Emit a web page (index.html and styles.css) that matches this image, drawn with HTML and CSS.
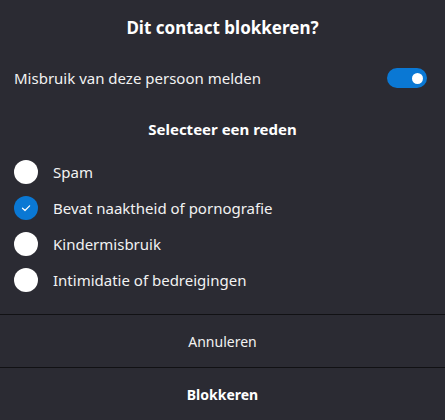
FILE: index.html
```html
<!DOCTYPE html>
<html lang="nl">
<head>
<meta charset="utf-8">
<link rel="stylesheet" href="styles.css">
</head>
<body>
<div class="dialog">
  <div class="title">Dit contact blokkeren?</div>
  <div class="toggle-row">
    <span class="toggle-label">Misbruik van deze persoon melden</span>
    <span class="toggle"><span class="knob"></span></span>
  </div>
  <div class="subtitle">Selecteer een reden</div>
  <div class="options">
    <div class="option"><span class="radio"></span><span class="opt-label">Spam</span></div>
    <div class="option"><span class="radio checked"><svg width="12" height="12" viewBox="0 0 12 12"><path d="M2.5 6.2 L5 8.5 L9.6 3.8" fill="none" stroke="#fff" stroke-width="1.2" stroke-linecap="round" stroke-linejoin="round"/></svg></span><span class="opt-label">Bevat naaktheid of pornografie</span></div>
    <div class="option"><span class="radio"></span><span class="opt-label">Kindermisbruik</span></div>
    <div class="option"><span class="radio"></span><span class="opt-label">Intimidatie of bedreigingen</span></div>
  </div>
  <div class="footer">
    <div class="btn">Annuleren</div>
    <div class="btn primary">Blokkeren</div>
  </div>
</div>
</body>
</html>
```
FILE: styles.css
```css
html, body {
  margin: 0;
  padding: 0;
  background: #2b2b33;
}
body {
  font-family: "Noto Sans", "Open Sans", sans-serif;
  color: #f2f2f2;
  width: 445px;
  height: 420px;
  overflow: hidden;
}
.dialog {
  display: flex;
  flex-direction: column;
  height: 420px;
}
.title {
  text-align: center;
  font-weight: 700;
  font-size: 17px;
  line-height: 22px;
  padding-top: 17px;
  color: #fff;
}
.toggle-row {
  display: flex;
  align-items: center;
  justify-content: space-between;
  padding: 0 18px 0 14px;
  margin-top: 18px;
  height: 42px;
}
.toggle-label {
  font-size: 15px;
}
.toggle {
  width: 40px;
  height: 20px;
  border-radius: 10px;
  background: #0a78d4;
  display: flex;
  align-items: center;
  justify-content: flex-end;
  padding-right: 4px;
  box-sizing: border-box;
}
.knob {
  width: 11px;
  height: 11px;
  border-radius: 50%;
  background: #fff;
}
.subtitle {
  text-align: center;
  font-weight: 700;
  font-size: 15px;
  line-height: 20px;
  margin-top: 20px;
  color: #fff;
}
.options {
  display: flex;
  flex-direction: column;
  margin-top: 15px;
  padding-left: 14px;
}
.option {
  display: flex;
  align-items: center;
  height: 36px;
}
.radio {
  width: 24px;
  height: 24px;
  border-radius: 50%;
  background: #fff;
  display: flex;
  align-items: center;
  justify-content: center;
  margin-right: 15px;
}
.radio.checked {
  background: #0a78d4;
}
.opt-label {
  font-size: 15px;
}
.footer {
  margin-top: auto;
  display: flex;
  flex-direction: column;
}
.btn {
  border-top: 1px solid #111114;
  height: 52px;
  display: flex;
  align-items: center;
  justify-content: center;
  font-size: 14px;
}
.btn.primary {
  font-weight: 700;
  color: #fff;
}
```
